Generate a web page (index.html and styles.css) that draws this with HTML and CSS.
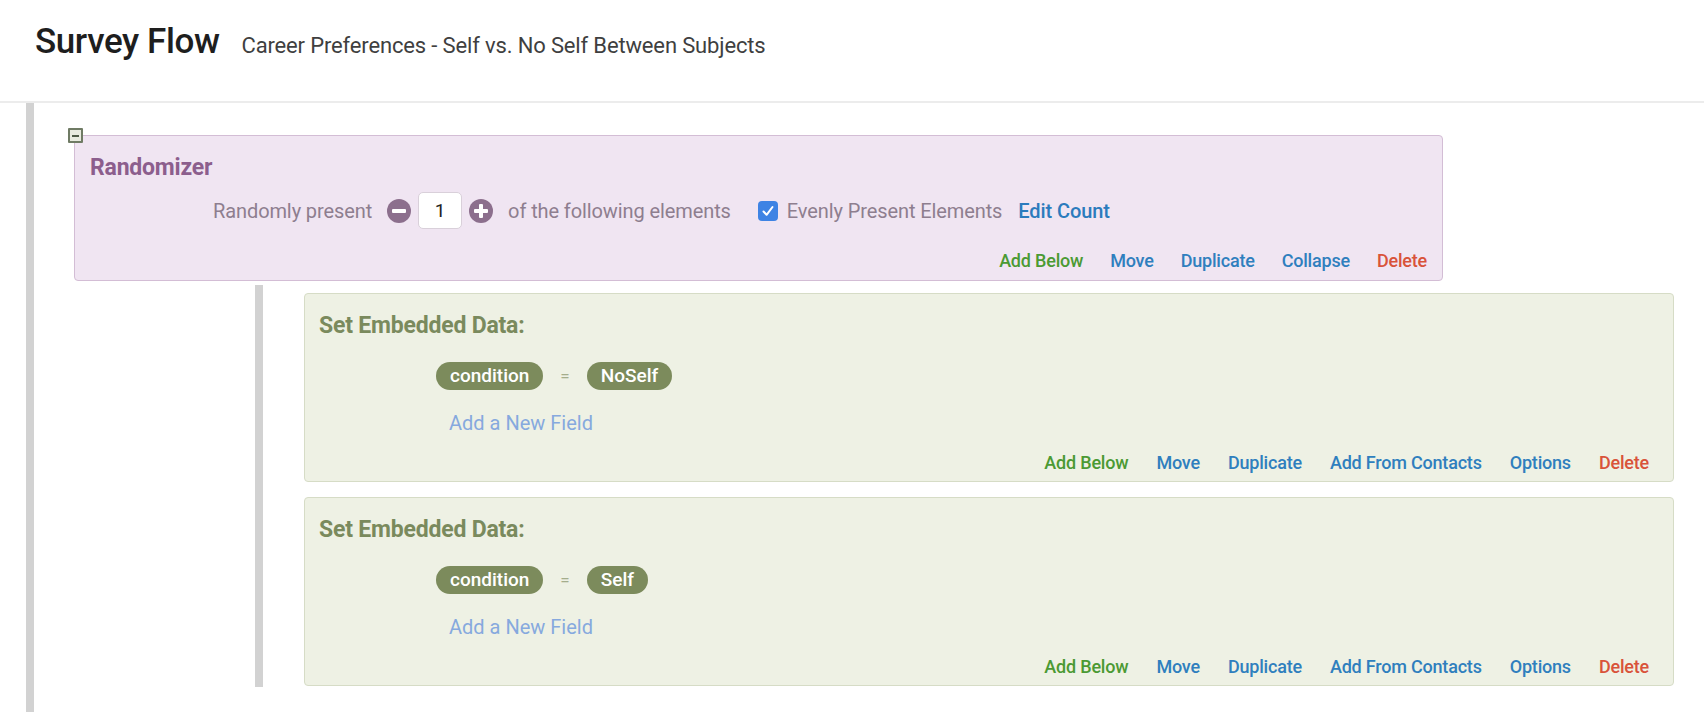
FILE: index.html
```html
<!DOCTYPE html>
<html lang="en">
<head>
<meta charset="utf-8">
<title>Survey Flow</title>
<link rel="stylesheet" href="styles.css">
</head>
<body>
<header class="page-header">
  <h1 class="page-title">Survey Flow</h1>
  <span class="page-subtitle">Career Preferences - Self vs. No Self Between Subjects</span>
</header>
<main class="flow">
  <section class="block randomizer">
    <span class="collapse-toggle" aria-label="collapse"></span>
    <h2 class="block-title">Randomizer</h2>
    <div class="rand-row">
      <span>Randomly present</span>
      <svg class="round-btn minus" viewBox="0 0 24 24" width="24" height="24"><circle cx="12" cy="12" r="12" fill="#8c6f8d"/><rect x="5" y="10" width="14" height="4" rx="1" fill="#fff"/></svg>
      <span class="count-input">1</span>
      <svg class="round-btn plus" viewBox="0 0 24 24" width="24" height="24"><circle cx="12" cy="12" r="12" fill="#8c6f8d"/><rect x="5" y="10" width="14" height="4" rx="1" fill="#fff"/><rect x="10" y="5" width="4" height="14" rx="1" fill="#fff"/></svg>
      <span class="gap-l">of the following elements</span>
      <svg class="checkbox" viewBox="0 0 20 20" width="20" height="20"><rect x="0" y="0" width="20" height="20" rx="4" fill="#3e83e4"/><path d="M5.5 10.5 L8.6 13.8 L14.5 6" fill="none" stroke="#fff" stroke-width="2" stroke-linecap="round" stroke-linejoin="round"/></svg>
      <span class="gap-s">Evenly Present Elements</span>
      <a class="edit-count">Edit Count</a>
    </div>
    <nav class="actions">
      <a class="act green">Add Below</a>
      <a class="act blue">Move</a>
      <a class="act blue">Duplicate</a>
      <a class="act blue">Collapse</a>
      <a class="act red">Delete</a>
    </nav>
  </section>

  <div class="children">
    <section class="block embedded">
      <h2 class="block-title">Set Embedded Data:</h2>
      <div class="field-row">
        <span class="pill">condition</span>
        <span class="eq">=</span>
        <span class="pill">NoSelf</span>
      </div>
      <a class="add-field">Add a New Field</a>
      <nav class="actions">
        <a class="act green">Add Below</a>
        <a class="act blue">Move</a>
        <a class="act blue">Duplicate</a>
        <a class="act blue">Add From Contacts</a>
        <a class="act blue">Options</a>
        <a class="act red">Delete</a>
      </nav>
    </section>
    <section class="block embedded">
      <h2 class="block-title">Set Embedded Data:</h2>
      <div class="field-row">
        <span class="pill">condition</span>
        <span class="eq">=</span>
        <span class="pill">Self</span>
      </div>
      <a class="add-field">Add a New Field</a>
      <nav class="actions">
        <a class="act green">Add Below</a>
        <a class="act blue">Move</a>
        <a class="act blue">Duplicate</a>
        <a class="act blue">Add From Contacts</a>
        <a class="act blue">Options</a>
        <a class="act red">Delete</a>
      </nav>
    </section>
  </div>
</main>
</body>
</html>
```

FILE: styles.css
```css
* { box-sizing: border-box; }
html, body { margin: 0; padding: 0; background: #fff; }
body {
  font-family: Roboto, "Liberation Sans", Arial, sans-serif;
  color: #333;
  width: 1704px;
  height: 712px;
  overflow: hidden;
}
a { cursor: pointer; }

.page-header {
  height: 103px;
  border-bottom: 2px solid #ececec;
  display: flex;
  align-items: baseline;
  padding: 21px 0 0 35px;
}
.page-title {
  margin: 0;
  font-size: 35px;
  font-weight: 500;
  color: #1e1e1e;
  letter-spacing: -0.4px;
  line-height: 42px;
}
.page-subtitle {
  margin-left: 22px;
  font-size: 22px;
  color: #3f3f3f;
  letter-spacing: -0.15px;
}

.flow {
  margin-left: 26px;
  border-left: 8px solid #d2d2d2;
  min-height: 609px;
  padding-top: 32px;
}

.block {
  position: relative;
  border: 1px solid;
  border-radius: 4px;
  display: flex;
  flex-direction: column;
}
.block-title {
  margin: 0;
  font-weight: 700;
  line-height: 24px;
  letter-spacing: -0.2px;
}

.randomizer {
  margin-left: 40px;
  width: 1369px;
  height: 146px;
  background: #f0e5f2;
  border-color: #d3bdd5;
  padding: 20px 15px 0 15px;
}
.randomizer .block-title { color: #8c5e8d; font-size: 23px; }

.collapse-toggle {
  position: absolute;
  left: -7px;
  top: -8px;
  width: 15px;
  height: 15px;
  border: 2px solid #6f7b64;
  background: #e8ebdf;
  border-radius: 1px;
}
.collapse-toggle::after {
  content: "";
  position: absolute;
  left: 2px;
  right: 2px;
  top: 4.5px;
  height: 2px;
  background: #4e5a46;
}

.rand-row {
  display: flex;
  align-items: center;
  height: 37px;
  margin-top: 12px;
  margin-left: 123px;
  font-size: 20px;
  letter-spacing: -0.1px;
  color: #8e7e8f;
}
.round-btn { margin-left: 15px; flex: none; }
.count-input {
  margin-left: 7px;
  width: 44px;
  height: 37px;
  background: #fff;
  border: 1px solid #d9d0da;
  border-radius: 5px;
  display: flex;
  align-items: center;
  justify-content: center;
  color: #222;
  font-size: 19px;
}
.round-btn.plus { margin-left: 7px; }
.gap-l { margin-left: 15px; }
.checkbox { margin-left: 27px; flex: none; }
.gap-s { margin-left: 9px; }
.edit-count {
  margin-left: 16px;
  color: #2b7bbd;
  font-weight: 500;
}

.actions {
  display: flex;
  justify-content: flex-end;
  gap: 28px;
  font-size: 18px;
  line-height: 20px;
  font-weight: 500;
  letter-spacing: -0.2px;
}
.randomizer .actions { margin-top: 22px; gap: 27px; }
.act.green { color: #4b9a33; }
.act.blue { color: #2f7fbe; }
.act.red { color: #d9533a; }

.children {
  margin-left: 221px;
  margin-top: 4px;
  border-left: 8px solid #d2d2d2;
  padding: 8px 0 1px 41px;
  display: flex;
  flex-direction: column;
  gap: 15px;
}

.embedded {
  width: 1370px;
  height: 189px;
  background: #eef1e4;
  border-color: #d6dcc6;
  padding: 20px 24px 0 14px;
}
.embedded .block-title { color: #7a8a5d; font-size: 23px; }

.field-row {
  display: flex;
  align-items: center;
  margin-top: 24px;
  margin-left: 117px;
  height: 28px;
}
.pill {
  height: 28px;
  line-height: 28px;
  padding: 0 14px;
  border-radius: 14px;
  background: #7c8b5c;
  color: #fff;
  font-size: 19px;
  font-weight: 500;
}
.eq {
  margin: 0 17px 0 17px;
  color: #a4ad8c;
  font-size: 17px;
}
.add-field {
  align-self: flex-start;
  margin-top: 22px;
  margin-left: 130px;
  font-size: 20px;
  line-height: 22px;
  color: #86a9de;
}
.embedded .actions { margin-top: 19px; }
```
